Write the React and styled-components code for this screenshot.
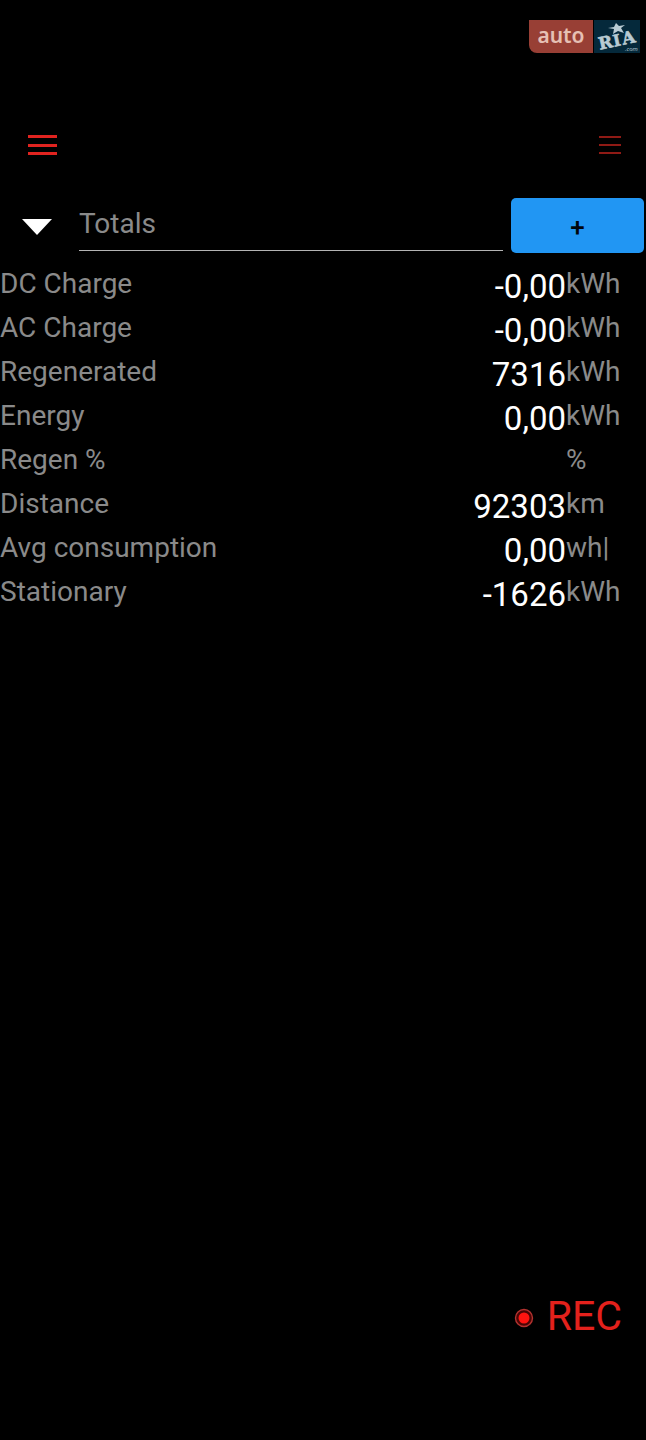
import React, { useState } from 'react';
import styled, { createGlobalStyle } from 'styled-components';

const GlobalStyle = createGlobalStyle`
    * {
        box-sizing: border-box;
    }

    body {
        margin: 0;
        background-color: #000000;
        font-family: Roboto, "Liberation Sans", sans-serif;
    }

    button, input {
        font-family: inherit;
    }
`

const StyledApp = styled.div`
    display: flex;
    flex-direction: column;
    min-height: 100vh;
    padding-bottom: 96px;
`

const StyledBrand = styled.div`
    display: flex;
    justify-content: flex-end;
    padding: 20px 6px 0 0;
    height: 120px;
`

const StyledBrandName = styled.div`
    display: flex;
    justify-content: center;
    width: 64px;
    height: 33px;
    margin-right: 1px;
    border-radius: 0 0 0 8px;
    background-color: #983f35;
    color: #e6c0b4;
    font-family: "Noto Sans", sans-serif;
    font-size: 21px;
    font-weight: 600;
    line-height: 30px;
`

const StyledBrandLogo = styled.svg`
    width: 46px;
    height: 33px;
    overflow: visible;
    background-color: #05293b;
`

const StyledToolbar = styled.header`
    display: flex;
    justify-content: space-between;
    align-items: center;
    height: 50px;
    padding: 0 25px 0 28px;
`

const StyledMenuButton = styled.button`
    display: flex;
    padding: 0;
    border: 0;
    background: none;
    color: ${({ $dim }) => ($dim ? '#8f1a15' : '#e0231f')};
    cursor: pointer;
`

const StyledSelector = styled.div`
    display: flex;
    align-items: stretch;
    height: 55px;
    margin-top: 28px;
    padding-right: 2px;
`

const StyledArrow = styled.button`
    display: flex;
    justify-content: center;
    align-items: center;
    width: 73px;
    padding: 2px 0 0;
    border: 0;
    background: none;
    cursor: pointer;
`

const StyledName = styled.input`
    flex: 1;
    min-width: 0;
    height: 53px;
    margin: 0 8px 0 6px;
    padding: 0 0 2px;
    border: 0;
    border-bottom: 1px solid #b4b4b4;
    border-radius: 0;
    outline: none;
    background: none;
    color: #8a8a8a;
    font-size: 28px;
`

const StyledAdd = styled.button`
    width: 133px;
    padding: 2px 0 0;
    border: 0;
    border-radius: 5px;
    background-color: #2196f3;
    color: #00060c;
    font-size: 26px;
    font-weight: 500;
    cursor: pointer;
`

const StyledTotals = styled.table`
    width: 100%;
    margin-top: 11px;
    border-collapse: collapse;
    color: #8a8a8a;
    font-size: 28px;

    tr {
        height: 44px;
    }

    th, td {
        padding: 0;
        font-weight: 400;
        line-height: 40px;
        text-align: left;
        vertical-align: top;
        white-space: nowrap;
    }
`

const StyledValue = styled.td`
    && {
        padding-top: 2px;
        color: #ffffff;
        font-size: 33px;
        line-height: 42px;
        text-align: right;
    }
`

const StyledUnit = styled.td`
    width: 80px;
`

const StyledRecord = styled.button`
    display: flex;
    align-items: center;
    align-self: flex-end;
    gap: 13px;
    margin: auto 24px 0 0;
    padding: 0;
    border: 0;
    background: none;
    color: #e3211c;
    font-size: 41px;
    line-height: 56px;
    cursor: pointer;

    > svg {
        margin-top: 4px;
    }
`

const totals = [
    { label: 'DC Charge', value: '-0,00', unit: 'kWh' },
    { label: 'AC Charge', value: '-0,00', unit: 'kWh' },
    { label: 'Regenerated', value: '7316', unit: 'kWh' },
    { label: 'Energy', value: '0,00', unit: 'kWh' },
    { label: 'Regen %', value: '', unit: '%' },
    { label: 'Distance', value: '92303', unit: 'km' },
    { label: 'Avg consumption', value: '0,00', unit: 'wh|' },
    { label: 'Stationary', value: '-1626', unit: 'kWh' }
];

const Brand = () => (
    <StyledBrand>
        <StyledBrandName>auto</StyledBrandName>
        <StyledBrandLogo viewBox="0 0 46 33" role="img" aria-label="RIA.com">
            <g fill="#b9cbd3">
                <g
                    transform="rotate(-12 23 20)"
                    fontFamily="'DejaVu Serif', serif"
                    fontWeight="700"
                    stroke="#b9cbd3"
                    strokeWidth="0.6"
                >
                    <text x="4" y="26" fontSize="17">R</text>
                    <text x="19" y="26" fontSize="16">I</text>
                    <text x="28" y="26" fontSize="17">A</text>
                </g>
                <path d="M14 8l6-1 2-4 3 3 6-1-4 3 3 5-6-2-5 3 1-5z" />
                <text x="31" y="31" fontFamily="'Open Sans', sans-serif" fontSize="6" fontStyle="italic">.com</text>
            </g>
        </StyledBrandLogo>
    </StyledBrand>
)

const App = () => {

    const [name, setName] = useState('Totals');
    const [isRecording, setIsRecording] = useState(true);

    return (
        <StyledApp className="app">
            <GlobalStyle />

            <Brand />

            <StyledToolbar>
                <StyledMenuButton aria-label="Menu">
                    <svg width="29" height="21" fill="currentColor">
                        <path d="M0 0h29v3H0zM0 9h29v3H0zM0 17h29v3H0z" />
                    </svg>
                </StyledMenuButton>
                <StyledMenuButton $dim aria-label="Options">
                    <svg width="22" height="18" fill="currentColor">
                        <path d="M0 0h22v2H0zM0 8h22v2H0zM0 16h22v2H0z" />
                    </svg>
                </StyledMenuButton>
            </StyledToolbar>

            <StyledSelector>
                <StyledArrow aria-label="Choose a list">
                    <svg width="30" height="16" fill="#ffffff">
                        <path d="M0 0h30L15 16z" />
                    </svg>
                </StyledArrow>
                <StyledName
                    aria-label="List name"
                    value={ name }
                    onChange={ e => setName(e.target.value) }
                />
                <StyledAdd aria-label="Add">+</StyledAdd>
            </StyledSelector>

            <StyledTotals>
                <tbody>
                    { totals.map(({ label, value, unit }) => (
                        <tr key={ label }>
                            <th scope="row">{ label }</th>
                            <StyledValue>{ value }</StyledValue>
                            <StyledUnit>{ unit }</StyledUnit>
                        </tr>
                    )) }
                </tbody>
            </StyledTotals>

            <StyledRecord
                aria-pressed={ isRecording }
                onClick={ () => setIsRecording(!isRecording) }
            >
                <svg width="20" height="20" viewBox="0 0 20 20">
                    <circle cx="10" cy="10" r="8.5" fill="#4a0505" stroke="#b3322f" strokeWidth="1.4" />
                    <circle cx="10" cy="10" r="5.5" fill="#ff1410" />
                </svg>
                REC
            </StyledRecord>

        </StyledApp>
    )

}

export default App;
